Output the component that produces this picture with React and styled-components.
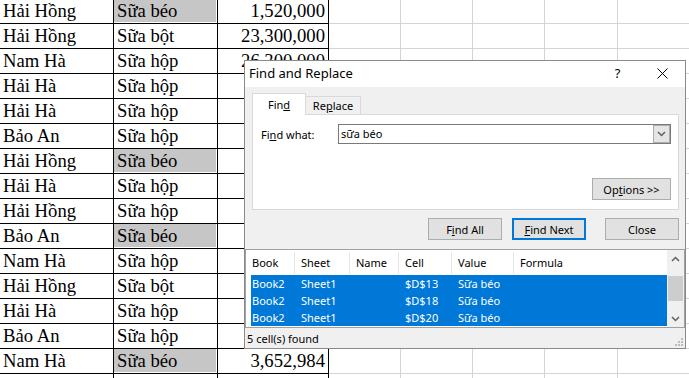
import React from 'react';
import styled, { createGlobalStyle } from 'styled-components';

const Global = createGlobalStyle`
  html, body { margin: 0; padding: 0; background: #fff; overflow: hidden; }
  #root { width: 689px; height: 378px; }
`;

const Page = styled.div`
  position: relative;
  width: 689px;
  height: 378px;
  overflow: hidden;
  background: #fff;
`;

/* ---------- spreadsheet ---------- */
const Sheet = styled.div`
  display: flex;
  flex-direction: column;
  margin-top: -1px;
`;

const Row = styled.div`
  display: flex;
  height: 25px;
  flex: none;
`;

const Cell = styled.div`
  box-sizing: border-box;
  flex: none;
  width: ${p => p.$w}px;
  height: 25px;
  border-right: 1px solid ${p => (p.$grid ? '#d4d4d4' : '#000')};
  border-bottom: 1px solid ${p => (p.$grid ? '#d4d4d4' : '#000')};
  padding: 0 3px;
  font-family: "Liberation Serif", "Times New Roman", serif;
  font-size: 18.67px;
  line-height: 24px;
  color: #000;
  white-space: nowrap;
  overflow: hidden;
  text-align: ${p => (p.$num ? 'right' : 'left')};
  background: ${p => (p.$hl ? '#c6c6c6' : 'transparent')};
  box-shadow: ${p => (p.$hl ? 'inset -1px -1px 0 #fff' : 'none')};
`;

const data = [
  ['Hải Hồng', 'Sữa béo', '1,520,000', true],
  ['Hải Hồng', 'Sữa bột', '23,300,000'],
  ['Nam Hà', 'Sữa hộp', '26,300,000'],
  ['Hải Hà', 'Sữa hộp', ''],
  ['Hải Hà', 'Sữa hộp', ''],
  ['Bảo An', 'Sữa hộp', ''],
  ['Hải Hồng', 'Sữa béo', '', true],
  ['Hải Hà', 'Sữa hộp', ''],
  ['Hải Hồng', 'Sữa hộp', ''],
  ['Bảo An', 'Sữa béo', '', true],
  ['Nam Hà', 'Sữa hộp', ''],
  ['Hải Hồng', 'Sữa bột', ''],
  ['Hải Hà', 'Sữa hộp', ''],
  ['Bảo An', 'Sữa hộp', ''],
  ['Nam Hà', 'Sữa béo', '3,652,984', true],
  ['Hải Hồng', 'Sữa hộp', '2,200,000'],
];

const gridCols = [72, 72, 72, 73, 72];

/* ---------- dialog ---------- */
const Dialog = styled.div`
  position: absolute;
  left: 244px;
  top: 60px;
  width: 442px;
  height: 289px;
  box-sizing: border-box;
  border: 1px solid #8a8a8a;
  background: #f0f0f0;
  display: flex;
  flex-direction: column;
  font-family: "Noto Sans", "Open Sans", sans-serif;
  font-size: 11px;
  color: #000;
`;

const TitleBar = styled.div`
  height: 26px;
  flex: none;
  background: #fff;
  display: flex;
  align-items: center;
`;

const Title = styled.div`
  flex: 1;
  padding-left: 4px;
  font-size: 13px;
  line-height: 22px;
  margin-bottom: 3px;
`;

const TitleBtn = styled.div`
  width: 45px;
  height: 22px;
  margin-bottom: ${p => p.$mb || 0}px;
  display: flex;
  align-items: center;
  justify-content: center;
  font-size: 13px;
`;

const Body = styled.div`
  flex: 1;
  display: flex;
  flex-direction: column;
`;

const TabArea = styled.div`
  padding: 6px 6px 0 7px;
  display: flex;
  flex-direction: column;
`;

const Tabs = styled.div`
  display: flex;
  align-items: flex-end;
  height: 21px;
`;

const Tab = styled.div`
  box-sizing: border-box;
  height: ${p => (p.$active ? 22 : 18)}px;
  width: ${p => (p.$active ? 54 : 55)}px;
  margin-bottom: ${p => (p.$active ? -1 : 0)}px;
  position: relative;
  z-index: ${p => (p.$active ? 1 : 0)};
  background: ${p => (p.$active ? '#fff' : '#f0f0f0')};
  border: 1px solid #d9d9d9;
  border-bottom: none;
  border-left: ${p => (p.$active ? '1px solid #d9d9d9' : 'none')};
  display: flex;
  justify-content: center;
  align-items: center;
  padding-bottom: ${p => (p.$active ? 1 : 0)}px;
`;

const Panel = styled.div`
  box-sizing: border-box;
  height: 96px;
  background: #fff;
  border: 1px solid #d9d9d9;
  display: flex;
  flex-direction: column;
  justify-content: space-between;
  padding: 9px 7px 9px 8px;
`;

const FieldRow = styled.div`
  display: flex;
  align-items: center;
  height: 20px;
`;

const Label = styled.div`
  width: 77px;
  flex: none;
`;

const Combo = styled.div`
  box-sizing: border-box;
  flex: 1;
  height: 20px;
  border: 1px solid #7a7a7a;
  display: flex;
  align-items: stretch;
  background: #fff;
`;

const ComboText = styled.div`
  flex: 1;
  padding-left: 2px;
  line-height: 18px;
`;

const DropBtn = styled.div`
  box-sizing: border-box;
  width: 17px;
  background: #e5e5e5;
  border: 1px solid #acacac;
  display: flex;
  align-items: center;
  justify-content: center;
`;

const PanelFoot = styled.div`
  display: flex;
  justify-content: flex-end;
`;

const Button = styled.div`
  box-sizing: border-box;
  width: ${p => p.$w || 74}px;
  height: 22px;
  background: #e1e1e1;
  border: ${p => (p.$focus ? '2px solid #0078d7' : '1px solid #adadad')};
  display: flex;
  align-items: center;
  justify-content: center;
  margin-left: ${p => p.$ml || 0}px;
`;

const ButtonRow = styled.div`
  display: flex;
  justify-content: flex-end;
  padding-right: 6px;
  margin-top: 8px;
`;

const ListBox = styled.div`
  box-sizing: border-box;
  height: 79px;
  margin-top: 9px;
  border: 1px solid #a0a0a0;
  background: #fff;
  display: flex;
`;

const ListMain = styled.div`
  flex: 1;
  display: flex;
  flex-direction: column;
`;

const HeaderRow = styled.div`
  display: flex;
  height: 25px;
  align-items: center;
`;

const HeadCell = styled.div`
  box-sizing: border-box;
  width: ${p => (p.$w ? `${p.$w}px` : 'auto')};
  flex: ${p => (p.$w ? 'none' : '1')};
  height: 22px;
  line-height: 22px;
  padding-left: 6px;
  border-right: ${p => (p.$w ? '1px solid #e5e5e5' : 'none')};
`;

const ResultRow = styled.div`
  display: flex;
  height: 17px;
  margin-left: 5px;
  background: #0078d7;
  color: #fff;
  line-height: 18px;
`;

const ResCell = styled.div`
  box-sizing: border-box;
  width: ${p => (p.$w ? `${p.$w}px` : 'auto')};
  flex: ${p => (p.$w ? 'none' : '1')};
  padding-left: ${p => p.$pl ?? 6}px;
  white-space: nowrap;
`;

const ScrollBar = styled.div`
  width: 17px;
  flex: none;
  background: #f0f0f0;
  display: flex;
  flex-direction: column;
`;

const ScrollArrow = styled.div`
  height: 17px;
  display: flex;
  align-items: center;
  justify-content: center;
`;

const ScrollTrack = styled.div`
  flex: 1;
  padding: 0 1px;
  display: flex;
  flex-direction: column;
  justify-content: center;
`;

const Thumb = styled.div`
  height: 25px;
  background: #cdcdcd;
`;

const Status = styled.div`
  flex: 1;
  display: flex;
  justify-content: space-between;
  align-items: center;
  padding-left: 2px;
`;

const Grip = styled.svg`
  align-self: flex-end;
  margin: 0 1px 1px 0;
`;

const Chevron = ({ up }) => (
  <svg width="9" height="6" viewBox="0 0 9 6">
    <path
      d={up ? 'M1 5 L4.5 1.5 L8 5' : 'M1 1 L4.5 4.5 L8 1'}
      fill="none"
      stroke="#606060"
      strokeWidth="1.5"
    />
  </svg>
);

const cols = [
  { name: 'Book', w: 49 },
  { name: 'Sheet', w: 55 },
  { name: 'Name', w: 49 },
  { name: 'Cell', w: 53 },
  { name: 'Value', w: 62 },
  { name: 'Formula' },
];

const results = ['$D$13', '$D$18', '$D$20'];

export default function App() {
  return (
    <Page>
      <Global />
      <Sheet>
        {data.map(([a, b, c, hl], i) => (
          <Row key={i}>
            <Cell $w={114}>{a}</Cell>
            <Cell $w={104} $hl={hl}>{b}</Cell>
            <Cell $w={111} $num>{c}</Cell>
            {gridCols.map((w, j) => (
              <Cell key={j} $w={w} $grid />
            ))}
          </Row>
        ))}
      </Sheet>

      <Dialog>
        <TitleBar>
          <Title>Find and Replace</Title>
          <TitleBtn $mb={3}>?</TitleBtn>
          <TitleBtn $mb={2}>
            <svg width="11" height="11" viewBox="0 0 11 11">
              <path d="M0.5 0.5 L10.5 10.5 M10.5 0.5 L0.5 10.5" stroke="#000" strokeWidth="1" />
            </svg>
          </TitleBtn>
        </TitleBar>
        <Body>
          <TabArea>
            <Tabs>
              <Tab $active>Fin<u>d</u></Tab>
              <Tab>Re<u>p</u>lace</Tab>
            </Tabs>
            <Panel>
              <FieldRow>
                <Label>Fi<u>n</u>d what:</Label>
                <Combo>
                  <ComboText>sữa béo</ComboText>
                  <DropBtn>
                    <Chevron />
                  </DropBtn>
                </Combo>
              </FieldRow>
              <PanelFoot>
                <Button $w={79}>Op<u>t</u>ions &gt;&gt;</Button>
              </PanelFoot>
            </Panel>
          </TabArea>
          <ButtonRow>
            <Button>F<u>i</u>nd All</Button>
            <Button $focus $ml={10}><u>F</u>ind Next</Button>
            <Button $ml={19}>Close</Button>
          </ButtonRow>
          <ListBox>
            <ListMain>
              <HeaderRow>
                {cols.map(c => (
                  <HeadCell key={c.name} $w={c.w}>{c.name}</HeadCell>
                ))}
              </HeaderRow>
              {results.map(r => (
                <ResultRow key={r}>
                  <ResCell $w={44} $pl={1}>Book2</ResCell>
                  <ResCell $w={55}>Sheet1</ResCell>
                  <ResCell $w={49}></ResCell>
                  <ResCell $w={53}>{r}</ResCell>
                  <ResCell $w={62}>Sữa béo</ResCell>
                  <ResCell></ResCell>
                </ResultRow>
              ))}
            </ListMain>
            <ScrollBar>
              <ScrollArrow><Chevron up /></ScrollArrow>
              <ScrollTrack><Thumb /></ScrollTrack>
              <ScrollArrow><Chevron /></ScrollArrow>
            </ScrollBar>
          </ListBox>
          <Status>
            <span>5 cell(s) found</span>
            <Grip width="10" height="10" viewBox="0 0 10 10">
              <rect x="7" y="1" width="2" height="2" fill="#bcbcbc" />
              <rect x="4" y="4" width="2" height="2" fill="#bcbcbc" />
              <rect x="7" y="4" width="2" height="2" fill="#bcbcbc" />
              <rect x="1" y="7" width="2" height="2" fill="#bcbcbc" />
              <rect x="4" y="7" width="2" height="2" fill="#bcbcbc" />
              <rect x="7" y="7" width="2" height="2" fill="#bcbcbc" />
            </Grip>
          </Status>
        </Body>
      </Dialog>
    </Page>
  );
}
